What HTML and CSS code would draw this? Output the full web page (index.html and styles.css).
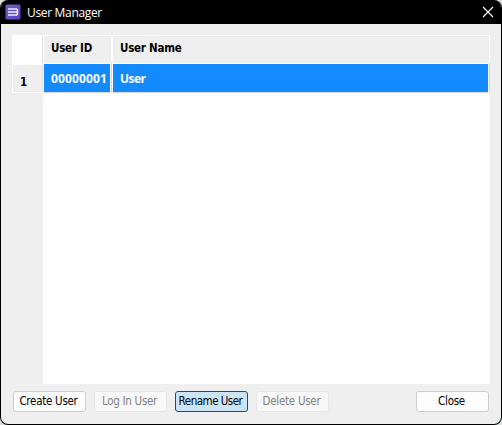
FILE: index.html
```html
<!DOCTYPE html>
<html lang="en">
<head>
<meta charset="utf-8">
<title>User Manager</title>
<link rel="stylesheet" href="styles.css">
</head>
<body>
<main class="window">
  <header class="titlebar">
    <svg class="logo" width="16" height="16" viewBox="0 0 16 16">
      <defs><linearGradient id="g" x1="0" y1="0" x2="1" y2="1"><stop offset="0" stop-color="#7263c5"/><stop offset="1" stop-color="#5a3fbe"/></linearGradient></defs>
      <rect x=".5" y=".5" width="15" height="15" rx="1.5" fill="url(#g)"/>
      <path d="M3 5h8.2a1.2 1.2 0 0 1 1.2 1.2v3.6a1.2 1.2 0 0 1-1.2 1.2H3M3 8h9" fill="none" stroke="#eeeafc" stroke-width="1.6"/>
    </svg>
    <h1 class="title">User Manager</h1>
    <svg class="close" width="12" height="12" viewBox="0 0 12 12"><path d="M1 1l10 10M11 1L1 11" stroke="#fff" stroke-width="1.1"/></svg>
  </header>
  <section class="table">
    <div class="corner"></div>
    <div class="head">User ID</div>
    <div class="head">User Name</div>
    <div class="rownum">1</div>
    <div class="cell id">00000001</div>
    <div class="cell name">User</div>
    <div class="gutter"></div>
    <div class="empty"></div>
  </section>
  <footer class="actions">
    <button class="btn">Create User</button>
    <button class="btn" disabled>Log In User</button>
    <button class="btn active">Rename User</button>
    <button class="btn" disabled>Delete User</button>
    <button class="btn last">Close</button>
  </footer>
</main>
</body>
</html>
```
FILE: styles.css
```css
* { box-sizing: border-box; }
body { margin: 0; background: #dcdedd; }
.window {
  width: 502px; height: 425px;
  display: flex; flex-direction: column;
  background: #efefef;
  border: 1px solid #000; border-top: 0;
  border-radius: 8px;
  overflow: hidden;
}
.titlebar {
  height: 24px; flex: none;
  display: flex; align-items: center;
  padding: 0 7px 0 4px;
  background: #000; color: #fff;
}
.title {
  flex: 1; margin: 2px 0 0 6px;
  font: 400 12px/16px "Open Sans", sans-serif;
  letter-spacing: -0.33px;
}
.table {
  flex: none;
  margin: 11px 11px 0;
  width: 478px; height: 349px;
  display: grid;
  grid-template: 28px 30px 1fr / 31px 69px 1fr;
  font: 700 11.5px/14px "DejaVu Sans Condensed", sans-serif;
  color: #000;
}
.table > div { white-space: nowrap; }
.corner { background: #fff; border-right: 1px solid #e2e2e2; }
.head {
  padding: 5px 0 0 7px;
  border: 1px solid #fff; border-bottom: 0;
  letter-spacing: -0.25px;
}
.rownum {
  border: 1px solid #fff; border-right-color: #e2e2e2;
  border-top-width: 2px;
  padding: 10px 0 0 7px;
}
.cell {
  background: #148aff; color: #fff;
  border: 1px solid #fff; border-bottom-color: #d5d5d5;
  padding: 7px 0 0 7px;
  font: 700 12px/16px "Noto Sans", sans-serif;
  position: relative;
}
.cell.id { letter-spacing: 0.15px; }
.cell.name { letter-spacing: -0.6px; }
.cell::after {
  content: ""; position: absolute;
  top: -1px; bottom: -1px; right: -1px; width: 2px;
  background: linear-gradient(90deg, #fff 50%, #d5d5d5 50%);
}
.gutter { background: #efefef; }
.empty { grid-column: 2 / 4; background: #fff; }
.actions {
  display: flex; gap: 8px;
  padding: 7px 12px 0;
}
.btn {
  width: 73px; height: 21px; padding: 0 2px 0 0;
  border: 1px solid #cdcdcd; border-radius: 3px;
  background: #fdfdfd; color: #000;
  font: 400 11.5px/17px "DejaVu Sans Condensed", sans-serif;
  letter-spacing: -0.28px;
  white-space: nowrap;
}
.btn:disabled { background: #f8f8f8; border-color: #e6e6e6; color: #838383; }
.btn.active { background: #cce4f7; border-color: #00559b; letter-spacing: -0.5px; }
.btn.last { margin-left: auto; }
```
